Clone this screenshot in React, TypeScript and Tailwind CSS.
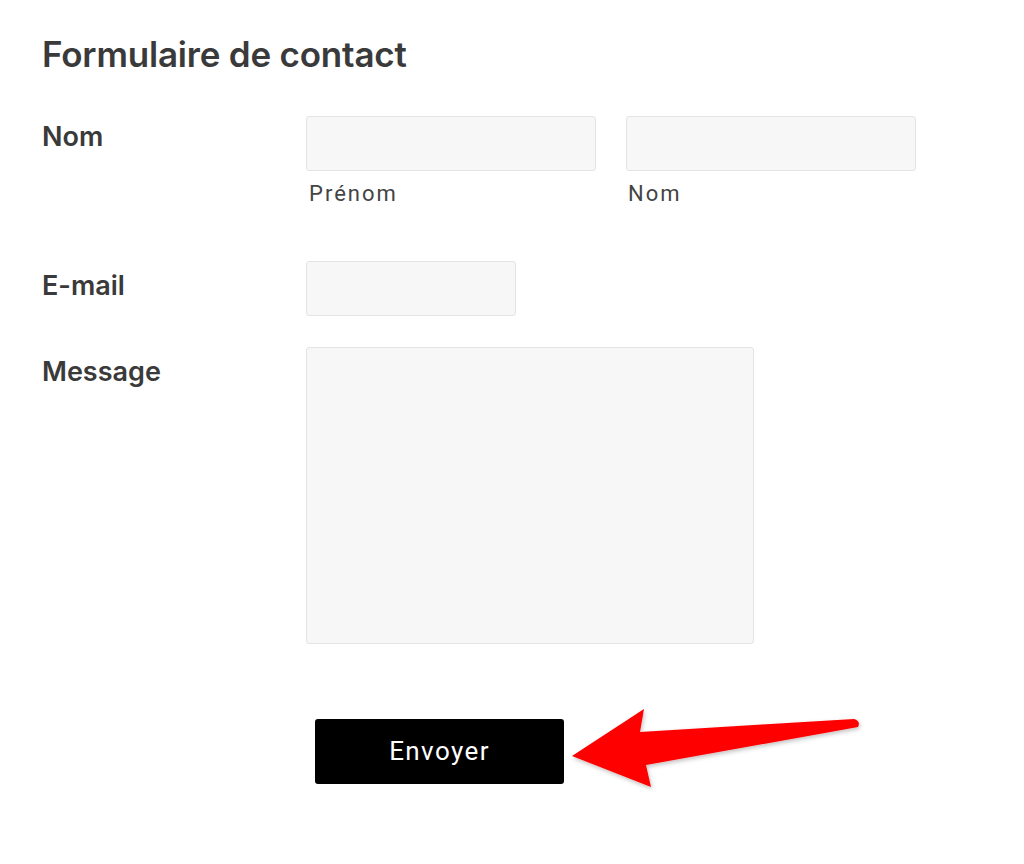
import React from "react";

const inputCls =
  "block h-[55px] rounded-[3px] border border-[#e4e4e4] bg-[#f7f7f7]";

export default function App() {
  return (
    <div className="relative min-h-[864px] w-[1024px] bg-white text-[#3a3a3a] [font-family:Inter,'Liberation_Sans',sans-serif]">
      <div className="pl-[42px] pt-[34px]">
        <h1 className="text-[35px] font-semibold leading-[40px] tracking-[-0.2px] text-[#3a3a3a]">
          Formulaire de contact
        </h1>

        <div className="mt-[42px] flex">
          <div className="w-[264px] pt-[6px] text-[27px] font-semibold leading-[30px]">Nom</div>
          <div className="flex gap-[30px]">
            <div>
              <div className={`${inputCls} w-[290px]`} />
              <div className="mt-[10px] pl-[3px] text-[22px] leading-[26px] tracking-[2px] text-[#444] [font-family:Roboto,sans-serif]">
                Prénom
              </div>
            </div>
            <div>
              <div className={`${inputCls} w-[290px]`} />
              <div className="mt-[10px] pl-[2px] text-[22px] leading-[26px] tracking-[2px] text-[#444] [font-family:Roboto,sans-serif]">
                Nom
              </div>
            </div>
          </div>
        </div>

        <div className="mt-[54px] flex">
          <div className="w-[264px] pt-[10px] text-[27px] font-semibold leading-[30px]">E-mail</div>
          <div className={`${inputCls} w-[210px]`} />
        </div>

        <div className="mt-[31px] flex">
          <div className="w-[264px] pt-[10px] text-[27px] font-semibold leading-[30px]">Message</div>
          <div className="h-[297px] w-[448px] rounded-[3px] border border-[#e4e4e4] bg-[#f7f7f7]" />
        </div>

        <div className="mt-[75px] pl-[273px]">
          <button className="flex h-[65px] w-[249px] items-center justify-center rounded-[3px] bg-black text-[26px] tracking-[1.4px] text-white [font-family:Roboto,sans-serif]">
            Envoyer
          </button>
        </div>
      </div>

      <svg
        className="absolute left-0 top-0"
        width="1024"
        height="864"
        viewBox="0 0 1024 864"
      >
        <defs>
          <filter id="sh" x="-10%" y="-30%" width="120%" height="160%">
            <feDropShadow dx="1" dy="2" stdDeviation="2" floodColor="#000" floodOpacity="0.25" />
          </filter>
        </defs>
        <path
          d="M572 756 L644 709 L640 732 L854 719 Q861 721 858 727 L646 765 L651 787 Z"
          fill="#ff0000"
          filter="url(#sh)"
        />
      </svg>
    </div>
  );
}
